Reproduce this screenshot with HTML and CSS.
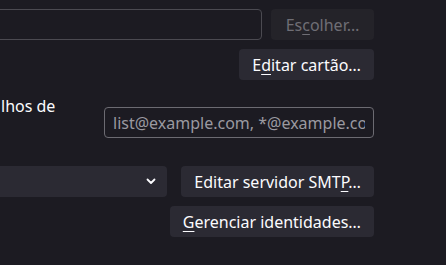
FILE: index.html
```html
<!DOCTYPE html>
<html lang="pt-BR">
<head>
    <meta charset="UTF-8">
    <title>Configurações da conta</title>
    <link rel="stylesheet" href="styles.css">
</head>
<body>
    <div class="panel">
        <div class="row">
            <input class="field field-disabled" type="text" disabled>
            <button class="btn btn-choose" disabled>Es<u>c</u>olher…</button>
        </div>
        <div class="row row-end">
            <button class="btn">E<u>d</u>itar cartão…</button>
        </div>
        <div class="row row-label">
            <span class="label">lhos de</span>
            <input class="field field-email" type="text" placeholder="list@example.com, *@example.com">
        </div>
        <div class="row row-smtp">
            <div class="select">
                <svg width="10" height="7" viewBox="0 0 10 7">
                    <path d="M1.5 1.5 L5 5 L8.5 1.5" fill="none" stroke="#fbfbfe" stroke-width="1.8" stroke-linecap="round" stroke-linejoin="round"/>
                </svg>
            </div>
            <button class="btn">Editar servidor SMT<u>P</u>…</button>
        </div>
        <div class="row row-end">
            <button class="btn"><u>G</u>erenciar identidades…</button>
        </div>
    </div>
</body>
</html>
```
FILE: styles.css
```css
body {
    margin: 0;
    background-color: #1c1b22;
    color: #fbfbfe;
    font-family: 'Noto Sans', 'Open Sans', sans-serif;
    font-size: 16px;
    overflow: hidden;
}
.panel {
    width: 374px;
    padding-top: 9px;
    display: flex;
    flex-direction: column;
}
.row {
    display: flex;
    align-items: center;
}
.row-end {
    justify-content: flex-end;
    margin-top: 9px;
}
.btn {
    height: 31px;
    padding: 0 13px;
    border: none;
    border-radius: 4px;
    background-color: #2b2a33;
    color: #fbfbfe;
    font-family: inherit;
    font-size: 16px;
    white-space: nowrap;
}
.btn u {
    text-underline-offset: 3px;
}
.btn:disabled {
    background-color: #242329;
    color: #6f6e75;
}
.btn-choose {
    min-width: 103px;
}
.field {
    box-sizing: border-box;
    height: 31px;
    border-radius: 4px;
    background-color: #1c1b22;
    font-family: inherit;
    font-size: 16px;
    color: #fbfbfe;
}
.field-disabled {
    flex: 1;
    margin-left: -10px;
    margin-right: 9px;
    border: 1px solid #4b4a51;
}
.field-email {
    width: 270px;
    margin-top: 11px;
    margin-left: auto;
    padding: 0 8px;
    border: 1px solid #6c6b72;
}
.field-email::placeholder {
    color: #9a99a0;
}
.row-label {
    align-items: flex-start;
    margin-top: 16px;
}
.label {
    padding-left: 1px;
    line-height: 20px;
}
.row-smtp {
    margin-top: 28px;
    justify-content: space-between;
}
.select {
    height: 31px;
    width: 177px;
    margin-left: -10px;
    border-radius: 4px;
    background-color: #2b2a33;
    display: flex;
    align-items: center;
    justify-content: flex-end;
    padding-right: 11px;
    box-sizing: border-box;
}
```
